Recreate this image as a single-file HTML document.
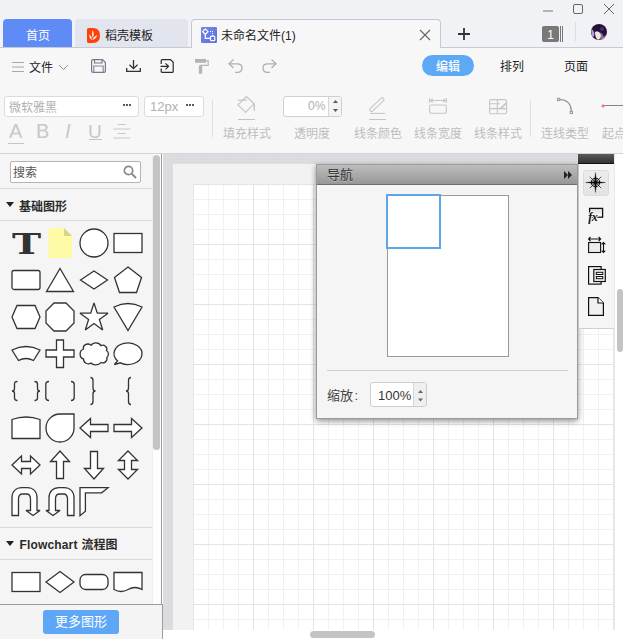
<!DOCTYPE html>
<html lang="zh-CN">
<head>
<meta charset="utf-8">
<title>未命名文件(1)</title>
<style>
*{box-sizing:border-box;margin:0;padding:0}
html,body{width:623px;height:639px;overflow:hidden;background:#f7f7f7}
body{position:relative;font-family:"Liberation Sans","Noto Sans CJK SC",sans-serif;font-size:12px;color:#333}
.abs{position:absolute}
.t{position:absolute;white-space:nowrap;line-height:1}
svg{position:absolute;overflow:visible}
#titlebar{left:0;top:0;width:623px;height:47px;background:#f1f2f5}
#tabline{left:0;top:47px;width:623px;height:1px;background:#c6cad4}
#tab1{left:3px;top:19px;width:69px;height:28px;background:#5f8bf7;border-radius:4px 4px 0 0}
#tab2{left:75px;top:19px;width:113px;height:28px;background:#e2e5ee;border-radius:4px 4px 0 0}
#tab3{left:191px;top:19px;width:250px;height:29px;background:#f7f7f7;border:1px solid #c3c8d3;border-bottom:none;border-radius:4px 4px 0 0}
#menurow{left:0;top:48px;width:623px;height:42px;background:#f7f7f7}
#toolrow{left:0;top:90px;width:623px;height:63px;background:#f7f7f7}
#toolborder{left:0;top:153px;width:623px;height:1px;background:#d4d4d4}
.box{position:absolute;background:#fff;border:1px solid #dcdcdc;border-radius:3px}
.lbl{color:#bdbdbd;font-size:12px}
.vsep{position:absolute;width:1px;background:#e0e0e0}
#left{left:0;top:154px;width:161px;height:485px;background:#f5f5f5}
#track{left:152px;top:154px;width:9px;height:450px;background:#fdfdfd;border-left:1px solid #eee}
#leftborder{left:161px;top:154px;width:1px;height:450px;background:#999}
.sec{position:absolute;left:0;width:152px;height:1px;background:#dadada}
.hd{font-weight:bold;font-size:12px;color:#2b2b2b}
.tri{position:absolute;width:0;height:0;border-left:4px solid transparent;border-right:4px solid transparent;border-top:5px solid #222}
#canvas{left:162px;top:154px;width:452px;height:476px;background:#d9dade;overflow:hidden;border-left:1px solid #fff;
 background-image:linear-gradient(to right,rgba(255,255,255,.09) 1px,transparent 1px),linear-gradient(to bottom,rgba(255,255,255,.09) 1px,transparent 1px);background-size:3px 3px}
#paper-bg{left:10px;top:10px;width:460px;height:480px;background:#f2f2f2}
#paper{left:30px;top:30px;width:460px;height:480px;background-color:#fff;
 background-image:linear-gradient(to right,#e4e4e4 1px,transparent 1px),linear-gradient(to bottom,#e4e4e4 1px,transparent 1px),linear-gradient(to right,#f1f1f1 1px,transparent 1px),linear-gradient(to bottom,#f1f1f1 1px,transparent 1px);
 background-size:60px 60px,60px 60px,15px 15px,15px 15px}
#hscroll{left:162px;top:630px;width:461px;height:9px;background:#fff}
#vscroll{left:614px;top:154px;width:9px;height:476px;background:#fff;border-left:1px solid #e9e9e9}
.thumb{position:absolute;background:#c4c4c4;border-radius:4px}
#nav{left:316px;top:164px;width:262px;height:255px;background:#f5f5f5;border:1px solid #9a9a9a;box-shadow:0 2px 6px rgba(0,0,0,.45)}
#navhd{left:0;top:0;width:260px;height:20px;background:linear-gradient(#bdbdbd,#979797);border-bottom:1px solid #6e6e6e}
#strip{left:578px;top:154px;width:36px;height:175px;background:#f5f5f5;border-left:1px solid #c4c4c4;border-bottom:1px solid #d0d0d0}
#striphd{left:578px;top:154px;width:36px;height:10px;background:linear-gradient(#5a5a5a,#333);border-bottom:1px solid #111}
#bottombar{left:0;top:604px;width:163px;height:35px;background:#f4f4f4;border-top:1px solid #9c9c9c;border-right:1px solid #9c9c9c}
</style>
</head>
<body>
<!-- TITLE BAR -->
<div id="titlebar" class="abs"></div>
<div id="tabline" class="abs"></div>
<div id="tab1" class="abs"></div>
<div class="t" style="left:26px;top:30px;font-size:12px;color:#fff">首页</div>
<div id="tab2" class="abs"></div>
<svg style="left:87px;top:28px" width="13" height="15" viewBox="0 0 13 15"><path d="M1.500,0 H6 Q13,0 13,7.500 Q13,15 6,15 H1.500 Q0,15 0,13.500 V1.500 Q0,0 1.500,0 Z" fill="#fb410c"/><path d="M5.800,1.900 Q7.600,6 6.100,10.300 Q4,6 5.800,1.900 Z M2.300,6.300 Q5,8.500 4.900,12 Q2.100,10.500 2.300,6.300 Z M10.200,7.100 Q9.500,10.800 5.300,12 Q6.500,8.500 10.200,7.100 Z" fill="#fff" opacity="0.920"/></svg>
<div class="t" style="left:105px;top:30px;font-size:12px;color:#222">稻壳模板</div>
<div id="tab3" class="abs"></div>
<svg style="left:201px;top:27px" width="16" height="16" viewBox="0 0 16 16"><defs><linearGradient id="fg" x1="0" y1="0" x2="1" y2="1"><stop offset="0" stop-color="#7189ec"/><stop offset="1" stop-color="#5d6fdf"/></linearGradient></defs><rect width="16" height="16" rx="1.200" fill="url(#fg)"/><path d="M4.300,1.900 L7.100,4.600 L4.300,7.300 L1.500,4.600 Z" fill="none" stroke="#fff" stroke-width="1.200" stroke-linejoin="round"/><path d="M4.300,7.300 V11.400 H9.300" fill="none" stroke="#fff" stroke-width="1.200"/><rect x="9.500" y="9.100" width="4.300" height="4.600" rx="1" fill="none" stroke="#fff" stroke-width="1.200"/><path d="M11.600,8 V9" stroke="#fff" stroke-width="1.200"/><path d="M9,4 H10 V5 H9 Z M11,4 H12 V5 H11 Z M11,6 H12 V7 H11 Z" fill="#fff"/></svg>
<div class="t" style="left:221px;top:30px;font-size:12px;color:#222">未命名文件(1)</div>
<svg style="left:420px;top:30px" width="10" height="10" viewBox="0 0 10 10"><path d="M0,0 L10,10 M10,0 L0,10" stroke="#666" stroke-width="1.100"/></svg>
<svg style="left:458px;top:28px" width="12" height="12" viewBox="0 0 12 12"><path d="M6,0 V12 M0,6 H12" stroke="#333" stroke-width="1.800"/></svg>
<!-- window controls -->
<svg style="left:543px;top:10px" width="10" height="2" viewBox="0 0 10 2"><path d="M0,1 H10" stroke="#777" stroke-width="1"/></svg>
<svg style="left:573px;top:4px" width="10" height="10" viewBox="0 0 10 10"><rect x="0.500" y="0.500" width="9" height="9" rx="1.500" fill="none" stroke="#666" stroke-width="1"/></svg>
<svg style="left:604px;top:4px" width="10" height="10" viewBox="0 0 10 10"><path d="M0,0 L10,10 M10,0 L0,10" stroke="#666" stroke-width="1"/></svg>
<div class="abs" style="left:542px;top:26px;width:17px;height:16px;background:#787878;border-radius:2px"></div>
<div class="t" style="left:542px;top:29px;width:17px;text-align:center;font-size:12px;color:#fff">1</div>
<div class="abs" style="left:560px;top:26px;width:1px;height:16px;background:#777"></div>
<div class="abs" style="left:562px;top:26px;width:1px;height:16px;background:#777"></div>
<div class="abs" style="left:575px;top:22px;width:1px;height:19px;background:#dcdde2"></div>
<svg style="left:591px;top:24px" width="16" height="16" viewBox="0 0 16 16"><defs><clipPath id="av"><circle cx="8" cy="8" r="8"/></clipPath></defs><g clip-path="url(#av)"><rect width="16" height="16" fill="#2a1442"/><path d="M0,5 Q3,6 3.500,10 Q3,14 1,13 Z" fill="#b79ad6"/><path d="M4,8 Q6,6.500 8,8 L10,11 Q10,15 7,16 Q4,14 4,8 Z" fill="#f2e6d8"/><path d="M8,8 Q12,9 12.500,13 L16,10 V16 H9 Q11,12 8,8 Z" fill="#c9b6e0" opacity="0.600"/><path d="M2,3 Q8,-1 14,3 Q16,7 14,10 Q10,8 8,7.500 Q5,6.500 3,8 Z" fill="#241038"/><circle cx="11" cy="5" r="2" fill="#4a2a78"/></g></svg>

<!-- MENU ROW -->
<div id="menurow" class="abs"></div>
<svg style="left:12px;top:62px" width="12" height="11" viewBox="0 0 12 11"><path d="M0,0.500 H12 M0,5 H12 M0,9.500 H12" stroke="#a8a8a8" stroke-width="1"/></svg>
<div class="t" style="left:29px;top:62px;font-size:12px;color:#222">文件</div>
<svg style="left:59px;top:65px" width="9" height="5" viewBox="0 0 9 5"><path d="M0.300,0.300 L4.500,4.500 L8.700,0.300" fill="none" stroke="#8a8a8a" stroke-width="1"/></svg>
<!-- save -->
<svg style="left:91px;top:59px" width="15" height="14" viewBox="0 0 15 14" fill="none" stroke="#7b7686" stroke-width="1.200"><path d="M0.600,2 Q0.600,0.600 2,0.600 H11.500 L14.400,3.500 V12 Q14.400,13.400 13,13.400 H2 Q0.600,13.400 0.600,12 Z"/><path d="M3.500,0.600 V4 H11 V0.600"/><path d="M2.800,13.400 V7 H12.200 V13.400" stroke="#8c88a0"/></svg>
<!-- download -->
<svg style="left:126px;top:60px" width="15" height="12" viewBox="0 0 15 12" fill="none" stroke="#333" stroke-width="1.300"><path d="M7.500,0 V8.500 M3.500,4.800 L7.500,8.600 L11.500,4.800"/><path d="M0.700,8 V11.300 H14.300 V8"/></svg>
<!-- export -->
<svg style="left:160px;top:59px" width="14" height="14" viewBox="0 0 14 14" fill="none" stroke="#2a2a2a" stroke-width="1.200"><path d="M1.200,5 V1.600 Q1.200,0.600 2.200,0.600 H10.500 L13.200,3.300 V12.400 Q13.200,13.400 12.200,13.400 H2.200 Q1.200,13.400 1.200,12.400 V9.500"/><path d="M0.500,7.300 H8.500 M5.500,4.300 L8.500,7.300 L5.500,10.300"/></svg>
<!-- format painter -->
<svg style="left:195px;top:59px" width="14" height="15" viewBox="0 0 14 15"><path d="M0,0 H11 V3.800 H0 Z" fill="#b4b4b4"/><path d="M11,1.800 H13.200 V6.300 H5.500 V8" fill="none" stroke="#b4b4b4" stroke-width="1.200"/><rect x="3.900" y="6.500" width="3.300" height="8.200" fill="#b4b4b4"/></svg>
<!-- undo -->
<svg style="left:228px;top:59px" width="15" height="14" viewBox="0 0 15 14" fill="none" stroke="#b0b0b0" stroke-width="1.300"><path d="M5.500,0.500 L1,4.800 L5.500,9"/><path d="M1,4.800 H9.500 Q14,4.800 14,9 Q14,13.300 9.500,13.300 H7"/></svg>
<!-- redo -->
<svg style="left:262px;top:59px" width="15" height="14" viewBox="0 0 15 14" fill="none" stroke="#b0b0b0" stroke-width="1.300"><path d="M9.500,0.500 L14,4.800 L9.500,9"/><path d="M14,4.800 H5.500 Q1,4.800 1,9 Q1,13.300 5.500,13.300 H8"/></svg>
<div class="abs" style="left:422px;top:55px;width:52px;height:21px;border-radius:10.5px;background:#5ea9f5"></div>
<div class="t" style="left:436px;top:61px;font-size:12px;color:#fff;font-weight:500">编辑</div>
<div class="t" style="left:500px;top:61px;font-size:12px;color:#222">排列</div>
<div class="t" style="left:564px;top:61px;font-size:12px;color:#222">页面</div>

<!-- TOOL ROW -->
<div id="toolrow" class="abs"></div>
<div id="toolborder" class="abs"></div>
<div class="box" style="left:4px;top:96px;width:135px;height:21px"></div>
<div class="t" style="left:9px;top:102px;font-size:12px;color:#b0b0b0">微软雅黑</div>
<svg style="left:123px;top:104px" width="8" height="2" viewBox="0 0 8 2"><path d="M0,0 H2 V2 H0 Z M3,0 H5 V2 H3 Z M6,0 H8 V2 H6 Z" fill="#5a5a5a"/></svg>
<div class="box" style="left:144px;top:96px;width:60px;height:21px"></div>
<div class="t" style="left:150px;top:100px;font-size:13px;color:#b0b0b0">12px</div>
<svg style="left:186px;top:104px" width="8" height="2" viewBox="0 0 8 2"><path d="M0,0 H2 V2 H0 Z M3,0 H5 V2 H3 Z M6,0 H8 V2 H6 Z" fill="#5a5a5a"/></svg>
<!-- A B I U align -->
<div class="t" style="left:9px;top:121px;font-size:20px;color:#c8c8c8">A</div>
<div class="abs" style="left:8px;top:142.500px;width:16px;height:1px;background:#c4c4c4"></div>
<div class="t" style="left:36px;top:121px;font-size:20px;color:#c8c8c8">B</div>
<div class="t" style="left:65px;top:121px;font-size:20px;color:#c8c8c8;font-style:italic">I</div>
<div class="t" style="left:88px;top:122px;font-size:19px;color:#c8c8c8">U</div>
<div class="abs" style="left:89px;top:138.500px;width:13px;height:1px;background:#c4c4c4"></div>
<svg style="left:113px;top:124px" width="18" height="15" viewBox="0 0 18 15"><path d="M4.500,0.500 H12.500 M0.500,5 H17.500 M4.500,9.500 H12.500 M0.500,14 H17.500" stroke="#c8c8c8" stroke-width="1"/></svg>
<div class="vsep" style="left:212px;top:100px;height:37px"></div>
<!-- fill icon -->
<svg style="left:237px;top:96px" width="19" height="17" viewBox="0 0 19 17" fill="none" stroke="#c6c6c6" stroke-width="1.200" stroke-linejoin="round"><path d="M9.400,0.500 L17,7.800 L8.600,16.400 L1,8.900 Z"/><path d="M0.800,4.200 H9.800"/><path d="M17.300,7.500 V14.800" stroke-width="1.400"/></svg>
<div class="abs" style="left:238px;top:119px;width:17px;height:1px;background:#c4c4c4"></div>
<div class="t lbl" style="left:223px;top:128px">填充样式</div>
<div class="box" style="left:283px;top:95.500px;width:59px;height:21px;border-color:#d0d0d0"></div>
<div class="abs" style="left:328px;top:96.500px;width:13px;height:19px;background:#f4f4f4;border-left:1px solid #d6d6d6;border-radius:0 2px 2px 0"></div>
<svg style="left:333px;top:100px" width="5" height="12" viewBox="0 0 5 12"><path d="M0,3 L2.500,0 L5,3 Z M0,9 L2.500,12 L5,9 Z" fill="#5a5a5a"/></svg>
<div class="t" style="left:308px;top:100px;font-size:12px;color:#b0b0b0">0%</div>
<div class="t lbl" style="left:294px;top:128px">透明度</div>
<!-- pen icon -->
<svg style="left:369px;top:96px" width="18" height="18" viewBox="0 0 18 18" fill="none" stroke="#c6c6c6" stroke-width="1.100"><g transform="translate(7.900,8.600) rotate(-43.500)"><rect x="-9" y="-1.700" width="18" height="3.400" rx="1.300"/></g><path d="M1.300,17.400 H16"/></svg>
<div class="abs" style="left:369px;top:119px;width:17px;height:1px;background:#c4c4c4"></div>
<div class="t lbl" style="left:354px;top:128px">线条颜色</div>
<svg style="left:429px;top:98px" width="18" height="16" viewBox="0 0 18 16" fill="none" stroke="#c6c6c6" stroke-width="1.100"><path d="M0.600,0 V5 M17.400,0 V5 M1.500,2.500 H16.500 M3.700,0.700 L1.700,2.500 L3.700,4.300 M14.300,0.700 L16.300,2.500 L14.300,4.300"/><rect x="0.600" y="7" width="16.800" height="8.300" rx="1.500"/></svg>
<div class="t lbl" style="left:414px;top:128px">线条宽度</div>
<svg style="left:489px;top:98.500px" width="18" height="16" viewBox="0 0 18 16" fill="none" stroke="#c6c6c6" stroke-width="1.100"><rect x="0.600" y="0.600" width="17" height="14.200" rx="1.500"/><path d="M0.600,4.800 H11 M8.300,0.600 V14.800"/><path d="M0.600,9.600 H17.400" stroke-width="1.400"/><path d="M17.400,3.800 L11.500,9.600" stroke-width="1.700"/></svg>
<div class="t lbl" style="left:474px;top:128px">线条样式</div>
<div class="vsep" style="left:530px;top:100px;height:37px"></div>
<svg style="left:557px;top:98px" width="16" height="16" viewBox="0 0 16 16" fill="none" stroke="#8e8e8e" stroke-width="1.200"><path d="M2.500,1.500 Q13.500,1.500 14.400,13"/><rect x="0.500" y="0.300" width="2.300" height="2.300" fill="#f7f7f7" stroke-width="0.900"/><rect x="13.200" y="13.300" width="2.300" height="2.300" fill="#f7f7f7" stroke-width="0.900"/></svg>
<div class="t lbl" style="left:541px;top:128px">连线类型</div>
<div class="abs" style="left:603px;top:105px;width:20px;height:1px;background:#858585"></div>
<svg style="left:600.500px;top:103.500px" width="4" height="4" viewBox="0 0 4 4"><path d="M0,2 L2,0 L4,2 L2,4 Z" fill="#f87f7f"/></svg>
<div class="t lbl" style="left:602px;top:128px">起点</div>

<!-- LEFT PANEL -->
<div id="left" class="abs"></div>
<div id="track" class="abs"></div>
<div id="leftborder" class="abs"></div>
<div class="abs" style="left:10px;top:161px;width:131px;height:22px;background:#fff;border:1px solid #b4b4b4;border-radius:2px"></div>
<div class="t" style="left:13px;top:167px;font-size:12px;color:#555">搜索</div>
<svg style="left:123px;top:165px" width="14" height="14" viewBox="0 0 14 14" fill="none" stroke="#8a8a8a"><circle cx="5.500" cy="5.500" r="4.200" stroke-width="1.700"/><path d="M8.700,8.700 L13,13" stroke-width="1.900"/></svg>
<div class="sec" style="top:188px"></div>
<div class="tri" style="left:6px;top:202px"></div>
<div class="t hd" style="left:19px;top:201px">基础图形</div>
<div class="sec" style="top:220px"></div>
<div class="t" style="left:11.500px;top:231px;font-family:'DejaVu Serif',serif;font-weight:bold;font-size:27px;color:#333;transform:scaleX(1.45);transform-origin:0 0">T</div>
<svg style="left:45px;top:228px" width="30" height="30" viewBox="0 0 30 30" fill="#fff" stroke="#333" stroke-width="1.300" stroke-linejoin="miter" stroke-miterlimit="3"><path d="M3.5,0 H19 L27,8 V30 H3.5 Z" fill="#fffaa6" stroke="none"/><path d="M19,0 L27,8 H19 Z" fill="#d9d48b" stroke="none"/></svg>
<svg style="left:79px;top:228px" width="30" height="30" viewBox="0 0 30 30" fill="#fff" stroke="#333" stroke-width="1.300" stroke-linejoin="miter" stroke-miterlimit="3"><circle cx="15" cy="15" r="14"/></svg>
<svg style="left:113px;top:228px" width="30" height="30" viewBox="0 0 30 30" fill="#fff" stroke="#333" stroke-width="1.300" stroke-linejoin="miter" stroke-miterlimit="3"><rect x="1" y="5.5" width="28" height="19"/></svg>
<svg style="left:11px;top:265px" width="30" height="30" viewBox="0 0 30 30" fill="#fff" stroke="#333" stroke-width="1.300" stroke-linejoin="miter" stroke-miterlimit="3"><rect x="1" y="5.5" width="28" height="19" rx="2"/></svg>
<svg style="left:45px;top:265px" width="30" height="30" viewBox="0 0 30 30" fill="#fff" stroke="#333" stroke-width="1.300" stroke-linejoin="miter" stroke-miterlimit="3"><path d="M15,3.5 L28.5,26.5 H1.5 Z"/></svg>
<svg style="left:79px;top:265px" width="30" height="30" viewBox="0 0 30 30" fill="#fff" stroke="#333" stroke-width="1.300" stroke-linejoin="miter" stroke-miterlimit="3"><path d="M1.5,15 L15,6 L28.5,15 L15,24 Z"/></svg>
<svg style="left:113px;top:265px" width="30" height="30" viewBox="0 0 30 30" fill="#fff" stroke="#333" stroke-width="1.300" stroke-linejoin="miter" stroke-miterlimit="3"><path d="M15,2 L28.5,12.5 L23.5,27.5 H6.5 L1.5,12.5 Z"/></svg>
<svg style="left:11px;top:302px" width="30" height="30" viewBox="0 0 30 30" fill="#fff" stroke="#333" stroke-width="1.300" stroke-linejoin="miter" stroke-miterlimit="3"><path d="M1,15 L6,3.5 H24 L29,15 L24,26.5 H6 Z"/></svg>
<svg style="left:45px;top:302px" width="30" height="30" viewBox="0 0 30 30" fill="#fff" stroke="#333" stroke-width="1.300" stroke-linejoin="miter" stroke-miterlimit="3"><path d="M9,1 H21 L29,9 V21 L21,29 H9 L1,21 V9 Z"/></svg>
<svg style="left:79px;top:302px" width="30" height="30" viewBox="0 0 30 30" fill="#fff" stroke="#333" stroke-width="1.300" stroke-linejoin="miter" stroke-miterlimit="3"><path d="M15,1 L18.3,11.2 H29 L20.4,17.5 L23.7,28 L15,21.6 L6.3,28 L9.6,17.5 L1,11.2 H11.7 Z"/></svg>
<svg style="left:113px;top:302px" width="30" height="30" viewBox="0 0 30 30" fill="#fff" stroke="#333" stroke-width="1.300" stroke-linejoin="miter" stroke-miterlimit="3"><path d="M1,5 Q15,-2 29,5 L15,28.5 Z"/></svg>
<svg style="left:11px;top:339px" width="30" height="30" viewBox="0 0 30 30" fill="#fff" stroke="#333" stroke-width="1.300" stroke-linejoin="miter" stroke-miterlimit="3"><path d="M1,11 Q15,4 29,11 L22.5,21.5 Q15,17.5 7.5,21.5 Z"/></svg>
<svg style="left:45px;top:339px" width="30" height="30" viewBox="0 0 30 30" fill="#fff" stroke="#333" stroke-width="1.300" stroke-linejoin="miter" stroke-miterlimit="3"><path d="M11.5,1 H18.5 V11 H29 V18 H18.5 V28.5 H11.5 V18 H1 V11 H11.5 Z"/></svg>
<svg style="left:79px;top:339px" width="30" height="30" viewBox="0 0 30 30" fill="#fff" stroke="#333" stroke-width="1.300" stroke-linejoin="miter" stroke-miterlimit="3"><path d="M4.500,10 C3.500,6 8,3.500 12.300,6.200 C14,3 20,3 21.900,6.600 C25,5 29,8 27.500,11.500 C30,13 30,17 27.800,18.500 C29,22 25,25 21.900,23.500 C20,26.500 14,26.500 12,24 C9,26 4.500,24 4.500,20 C0.500,19 -0.500,12 4.500,10 Z"/></svg>
<svg style="left:113px;top:339px" width="30" height="30" viewBox="0 0 30 30" fill="#fff" stroke="#333" stroke-width="1.300" stroke-linejoin="miter" stroke-miterlimit="3"><path d="M4.600,21.900 A14,10.800 0 1 1 7.500,23.800 L1.300,25.500 Z"/></svg>
<svg style="left:11px;top:376px" width="30" height="30" viewBox="0 0 30 30" fill="#fff" stroke="#333" stroke-width="1.300" stroke-linejoin="miter" stroke-miterlimit="3"><path d="M6.5,5.5 Q3.5,5.5 3.5,8 V12.5 Q3.5,15 1,15 Q3.5,15 3.5,17.5 V22 Q3.5,24.5 6.5,24.5" fill="none"/><path d="M23.5,5.5 Q26.5,5.5 26.5,8 V12.5 Q26.5,15 29,15 Q26.5,15 26.5,17.5 V22 Q26.5,24.5 23.5,24.5" fill="none"/></svg>
<svg style="left:45px;top:376px" width="30" height="30" viewBox="0 0 30 30" fill="#fff" stroke="#333" stroke-width="1.300" stroke-linejoin="miter" stroke-miterlimit="3"><path d="M4,5.5 Q0.8,5.5 0.8,8.5 V21.5 Q0.8,24.5 4,24.5" fill="none"/><path d="M26,5.5 Q29.2,5.5 29.2,8.5 V21.5 Q29.2,24.5 26,24.5" fill="none"/></svg>
<svg style="left:79px;top:376px" width="30" height="30" viewBox="0 0 30 30" fill="#fff" stroke="#333" stroke-width="1.300" stroke-linejoin="miter" stroke-miterlimit="3"><path d="M11.5,1.5 Q14,1.5 14,4.5 V12 Q14,15 16.5,15 Q14,15 14,18 V25.5 Q14,28.5 11.5,28.5" fill="none"/></svg>
<svg style="left:113px;top:376px" width="30" height="30" viewBox="0 0 30 30" fill="#fff" stroke="#333" stroke-width="1.300" stroke-linejoin="miter" stroke-miterlimit="3"><path d="M18,1.5 Q15.5,1.5 15.5,4.5 V12 Q15.5,15 13,15 Q15.5,15 15.5,18 V25.5 Q15.5,28.5 18,28.5" fill="none"/></svg>
<svg style="left:11px;top:413px" width="30" height="30" viewBox="0 0 30 30" fill="#fff" stroke="#333" stroke-width="1.300" stroke-linejoin="miter" stroke-miterlimit="3"><path d="M1,6.5 Q15,1.5 29,6.5 V25.5 H1 Z"/></svg>
<svg style="left:45px;top:413px" width="30" height="30" viewBox="0 0 30 30" fill="#fff" stroke="#333" stroke-width="1.300" stroke-linejoin="miter" stroke-miterlimit="3"><path d="M15,1 H29 V15 A14,14 0 1 1 15,1 Z"/></svg>
<svg style="left:79px;top:413px" width="30" height="30" viewBox="0 0 30 30" fill="#fff" stroke="#333" stroke-width="1.300" stroke-linejoin="miter" stroke-miterlimit="3"><path d="M1,15 L11.5,5.5 V11.5 H29 V18.5 H11.5 V24.5 Z"/></svg>
<svg style="left:113px;top:413px" width="30" height="30" viewBox="0 0 30 30" fill="#fff" stroke="#333" stroke-width="1.300" stroke-linejoin="miter" stroke-miterlimit="3"><path d="M29,15 L18.5,5.5 V11.5 H1 V18.5 H18.5 V24.5 Z"/></svg>
<svg style="left:11px;top:450px" width="30" height="30" viewBox="0 0 30 30" fill="#fff" stroke="#333" stroke-width="1.300" stroke-linejoin="miter" stroke-miterlimit="3"><path d="M1,15 L10.5,6 V11.5 H19.5 V6 L29,15 L19.5,24 V18.5 H10.5 V24 Z"/></svg>
<svg style="left:45px;top:450px" width="30" height="30" viewBox="0 0 30 30" fill="#fff" stroke="#333" stroke-width="1.300" stroke-linejoin="miter" stroke-miterlimit="3"><path d="M15,1 L24.5,11.5 H18.5 V28.5 H11.5 V11.5 H5.5 Z"/></svg>
<svg style="left:79px;top:450px" width="30" height="30" viewBox="0 0 30 30" fill="#fff" stroke="#333" stroke-width="1.300" stroke-linejoin="miter" stroke-miterlimit="3"><path d="M15,29 L24.5,18.5 H18.5 V1.5 H11.5 V18.5 H5.5 Z"/></svg>
<svg style="left:113px;top:450px" width="30" height="30" viewBox="0 0 30 30" fill="#fff" stroke="#333" stroke-width="1.300" stroke-linejoin="miter" stroke-miterlimit="3"><path d="M15,1 L24.5,10.5 H18.5 V19.5 H24.5 L15,29 L5.5,19.5 H11.5 V10.5 H5.5 Z"/></svg>
<svg style="left:11px;top:487px" width="30" height="30" viewBox="0 0 30 30" fill="#fff" stroke="#333" stroke-width="1.300" stroke-linejoin="miter" stroke-miterlimit="3"><path d="M1,28.500 V11 C1,4.500 5,0.700 11,0.700 H16 C22,0.700 26,4.500 26,11 V23.500 H29 L22,28.500 L15,23.500 H19.500 V12 C19.500,8.500 18,7 15.500,7 H11.500 C9,7 7.500,8.500 7.500,12 V28.500 Z"/></svg>
<svg style="left:45px;top:487px" width="30" height="30" viewBox="0 0 30 30" fill="#fff" stroke="#333" stroke-width="1.300" stroke-linejoin="miter" stroke-miterlimit="3"><path d="M29,28.500 V11 C29,4.500 25,0.700 19,0.700 H14 C8,0.700 4,4.500 4,11 V23.500 H1 L8,28.500 L15,23.500 H10.500 V12 C10.500,8.500 12,7 14.500,7 H18.500 C21,7 22.500,8.500 22.500,12 V28.500 Z"/></svg>
<svg style="left:79px;top:487px" width="30" height="30" viewBox="0 0 30 30" fill="#fff" stroke="#333" stroke-width="1.300" stroke-linejoin="miter" stroke-miterlimit="3"><path d="M1,0.700 H29 L22.700,5.800 H6.400 V24.300 L1,28.700 Z"/></svg>
<svg style="left:11px;top:567px" width="30" height="30" viewBox="0 0 30 30" fill="#fff" stroke="#333" stroke-width="1.300" stroke-linejoin="miter" stroke-miterlimit="3"><rect x="1" y="5.5" width="28" height="19"/></svg>
<svg style="left:45px;top:567px" width="30" height="30" viewBox="0 0 30 30" fill="#fff" stroke="#333" stroke-width="1.300" stroke-linejoin="miter" stroke-miterlimit="3"><path d="M1,15 L15,4.5 L29,15 L15,25.5 Z"/></svg>
<svg style="left:79px;top:567px" width="30" height="30" viewBox="0 0 30 30" fill="#fff" stroke="#333" stroke-width="1.300" stroke-linejoin="miter" stroke-miterlimit="3"><rect x="1" y="7.5" width="28" height="15" rx="5.5"/></svg>
<svg style="left:113px;top:567px" width="30" height="30" viewBox="0 0 30 30" fill="#fff" stroke="#333" stroke-width="1.300" stroke-linejoin="miter" stroke-miterlimit="3"><path d="M1,5.500 H29 V22.5 Q22,18.500 15,22.500 T1,22.500 Z"/></svg>
<div class="sec" style="top:527px"></div>
<div class="tri" style="left:6px;top:541px"></div>
<div class="t hd" style="left:19.500px;top:539px;letter-spacing:0.150px">Flowchart</div><div class="t hd" style="left:81.500px;top:539px">流程图</div>
<div class="sec" style="top:559px"></div>
<div class="thumb" style="left:153px;top:155px;width:7px;height:295px"></div>
<!-- CANVAS -->
<div id="canvas" class="abs">
  <div id="paper-bg" class="abs"></div>
  <div id="paper" class="abs"></div>
</div>
<div id="hscroll" class="abs"><div class="thumb" style="left:148px;top:1px;width:65px;height:7px;border-radius:3.500px"></div></div>
<div id="vscroll" class="abs"><div class="thumb" style="left:1.500px;top:135px;width:6.500px;height:63px;border-radius:3px"></div></div>

<!-- BOTTOM BAR -->
<div id="bottombar" class="abs"></div>
<div class="abs" style="left:43px;top:610px;width:76px;height:24px;background:#5ea7f6;border-radius:3px"></div>
<div class="t" style="left:55px;top:615px;font-size:13px;color:#fff">更多图形</div>


<!-- NAV PANEL -->
<div id="nav" class="abs">
  <div id="navhd" class="abs"></div>
  <div class="t" style="left:10px;top:3px;font-size:13px;color:#333;text-shadow:0 1px 0 rgba(255,255,255,.35)">导航</div>
  <svg style="left:247px;top:6px" width="8" height="8" viewBox="0 0 8 8"><path d="M0,0 L4,4 L0,8 Z M4,0 L8,4 L4,8 Z" fill="#222"/></svg>
  <div class="abs" style="left:70px;top:30px;width:122px;height:162px;background:#fff;border:1px solid #999"></div>
  <div class="abs" style="left:69px;top:29px;width:55px;height:55px;background:#fff;border:2px solid #5ea6e8"></div>
  <div class="abs" style="left:10px;top:205px;width:241px;height:1px;background:#cfcfcf"></div>
  <div class="t" style="left:10px;top:224px;font-size:13px;color:#444">缩放<span style="margin-left:1.500px">:</span></div>
  <div class="box" style="left:53px;top:217px;width:57px;height:25px;border-color:#cdcdcd"></div>
  <div class="abs" style="left:96px;top:218px;width:13px;height:23px;background:#efefef;border-left:1px solid #d6d6d6;border-radius:0 2px 2px 0"></div>
  <svg style="left:101px;top:224.500px" width="5" height="11.500" viewBox="0 0 5 11.500"><path d="M0,3 L2.500,0 L5,3 Z M0,8.500 L2.500,11.500 L5,8.500 Z" fill="#666"/></svg>
  <div class="t" style="left:61px;top:224px;font-size:13px;color:#333">100%</div>
</div>

<!-- RIGHT STRIP -->
<div id="strip" class="abs"></div>
<div id="striphd" class="abs"></div>
<div class="abs" style="left:583px;top:170px;width:26px;height:26px;background:linear-gradient(#ebebeb,#e3e3e3);border:1px solid #dadada;border-radius:3px"></div>
<!-- compass -->
<svg style="left:585.100px;top:172.200px" width="21" height="21" viewBox="-10.500 -10.500 21 21"><circle r="4.200" fill="none" stroke="#0a0a0a" stroke-width="1.100"/><path d="M-5.700,-5.700 L5.700,5.700 M5.700,-5.700 L-5.700,5.700" stroke="#0a0a0a" stroke-width="0.700"/><path d="M0,-10 L1.100,-1.100 L10,0 L1.100,1.100 L0,10 L-1.100,1.100 L-10,0 L-1.100,-1.100 Z" fill="#0a0a0a" stroke="#0a0a0a" stroke-width="0.300"/><circle r="1.500" fill="#0a0a0a"/></svg>
<!-- fx -->
<svg style="left:587px;top:207px" width="17" height="17" viewBox="0 0 17 17"><defs><linearGradient id="fxg" x1="0" y1="0" x2="0" y2="1"><stop offset="0" stop-color="#dcdcdc"/><stop offset="1" stop-color="#ffffff"/></linearGradient></defs><rect x="2.600" y="1.400" width="13" height="8.800" fill="url(#fxg)" stroke="#111" stroke-width="1.300"/><text x="1.300" y="13.600" font-family="Liberation Serif,serif" font-style="italic" font-weight="bold" font-size="12" fill="#111" stroke="#f5f5f5" stroke-width="1.800" paint-order="stroke" letter-spacing="-0.500">fx</text></svg>
<!-- size -->
<svg style="left:588px;top:236px" width="18" height="18" viewBox="0 0 18 18" fill="none" stroke="#111" stroke-width="1.100"><rect x="0.600" y="6.500" width="12" height="10" fill="#ececec"/><path d="M0.600,3 H12.600 M2.500,1 L0.600,3 L2.500,5 M10.700,1 L12.600,3 L10.700,5"/><path d="M15.500,6.500 V16.500 M13.700,8.300 L15.500,6.500 L17.300,8.300 M13.700,14.700 L15.500,16.500 L17.300,14.700"/></svg>
<!-- layers -->
<svg style="left:588px;top:266px" width="18" height="19" viewBox="0 0 18 19" fill="none" stroke="#111" stroke-width="1.200"><rect x="0.600" y="0.600" width="12.500" height="17.500" fill="#f5f5f5"/><rect x="5.800" y="3.500" width="11.500" height="12" fill="#f5f5f5"/><rect x="8.300" y="6.300" width="6.500" height="2.200" stroke-width="1"/><rect x="8.300" y="10.500" width="6.500" height="2.200" stroke-width="1"/></svg>
<!-- page -->
<svg style="left:588px;top:297px" width="16" height="19" viewBox="0 0 16 19" fill="none" stroke="#111" stroke-width="1.200"><path d="M0.600,0.600 H10 L15.400,6 V18.400 H0.600 Z" fill="#f0f0f0"/><path d="M10,0.600 V6 H15.400" fill="#fff"/></svg>

</body>
</html>
